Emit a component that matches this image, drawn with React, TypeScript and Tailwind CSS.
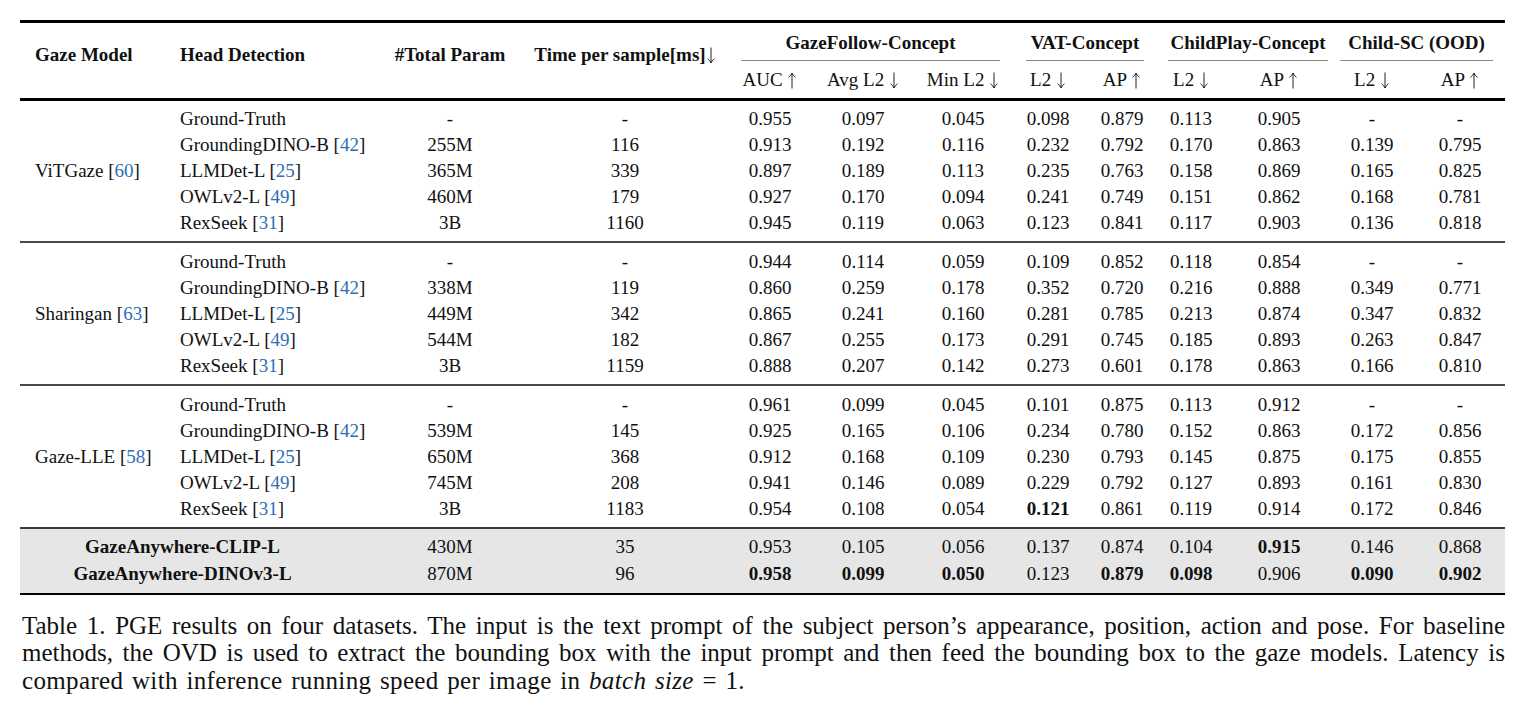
import type { ReactNode } from 'react'

type GroupRow = {
  detector: string
  cite?: string
  values: string[]
}

type Group = {
  model: string
  cite: string
  rows: GroupRow[]
}

// '*' prefix marks a bold value
const groups: Group[] = [
  {
    model: 'ViTGaze',
    cite: '60',
    rows: [
      { detector: 'Ground-Truth', values: ['-', '-', '0.955', '0.097', '0.045', '0.098', '0.879', '0.113', '0.905', '-', '-'] },
      { detector: 'GroundingDINO-B', cite: '42', values: ['255M', '116', '0.913', '0.192', '0.116', '0.232', '0.792', '0.170', '0.863', '0.139', '0.795'] },
      { detector: 'LLMDet-L', cite: '25', values: ['365M', '339', '0.897', '0.189', '0.113', '0.235', '0.763', '0.158', '0.869', '0.165', '0.825'] },
      { detector: 'OWLv2-L', cite: '49', values: ['460M', '179', '0.927', '0.170', '0.094', '0.241', '0.749', '0.151', '0.862', '0.168', '0.781'] },
      { detector: 'RexSeek', cite: '31', values: ['3B', '1160', '0.945', '0.119', '0.063', '0.123', '0.841', '0.117', '0.903', '0.136', '0.818'] }
    ]
  },
  {
    model: 'Sharingan',
    cite: '63',
    rows: [
      { detector: 'Ground-Truth', values: ['-', '-', '0.944', '0.114', '0.059', '0.109', '0.852', '0.118', '0.854', '-', '-'] },
      { detector: 'GroundingDINO-B', cite: '42', values: ['338M', '119', '0.860', '0.259', '0.178', '0.352', '0.720', '0.216', '0.888', '0.349', '0.771'] },
      { detector: 'LLMDet-L', cite: '25', values: ['449M', '342', '0.865', '0.241', '0.160', '0.281', '0.785', '0.213', '0.874', '0.347', '0.832'] },
      { detector: 'OWLv2-L', cite: '49', values: ['544M', '182', '0.867', '0.255', '0.173', '0.291', '0.745', '0.185', '0.893', '0.263', '0.847'] },
      { detector: 'RexSeek', cite: '31', values: ['3B', '1159', '0.888', '0.207', '0.142', '0.273', '0.601', '0.178', '0.863', '0.166', '0.810'] }
    ]
  },
  {
    model: 'Gaze-LLE',
    cite: '58',
    rows: [
      { detector: 'Ground-Truth', values: ['-', '-', '0.961', '0.099', '0.045', '0.101', '0.875', '0.113', '0.912', '-', '-'] },
      { detector: 'GroundingDINO-B', cite: '42', values: ['539M', '145', '0.925', '0.165', '0.106', '0.234', '0.780', '0.152', '0.863', '0.172', '0.856'] },
      { detector: 'LLMDet-L', cite: '25', values: ['650M', '368', '0.912', '0.168', '0.109', '0.230', '0.793', '0.145', '0.875', '0.175', '0.855'] },
      { detector: 'OWLv2-L', cite: '49', values: ['745M', '208', '0.941', '0.146', '0.089', '0.229', '0.792', '0.127', '0.893', '0.161', '0.830'] },
      { detector: 'RexSeek', cite: '31', values: ['3B', '1183', '0.954', '0.108', '0.054', '*0.121', '0.861', '0.119', '0.914', '0.172', '0.846'] }
    ]
  }
]

const ours = [
  { name: 'GazeAnywhere-CLIP-L', values: ['430M', '35', '0.953', '0.105', '0.056', '0.137', '0.874', '0.104', '*0.915', '0.146', '0.868'] },
  { name: 'GazeAnywhere-DINOv3-L', values: ['870M', '96', '*0.958', '*0.099', '*0.050', '0.123', '*0.879', '*0.098', '0.906', '*0.090', '*0.902'] }
]

const colWidths = ['w-[145px]', 'w-[220px]', 'w-[130px]', 'w-[220px]', 'w-[70px]', 'w-[116px]', 'w-[84px]', 'w-[86px]', 'w-[62px]', 'w-[76px]', 'w-[100px]', 'w-[86px]', 'w-[90px]']

const Cite = ({ n }: { n: string }) => (
  <>
    [<span className="text-[#2f6db8]">{ n }</span>]
  </>
)

const Value = ({ v }: { v: string }) => (
  v.startsWith('*') ? <span className="font-bold">{ v.slice(1) }</span> : <>{ v }</>
)

// thin math-style arrow, like $\uparrow$ / $\downarrow$
const Arrow = ({ up }: { up?: boolean }) => (
  <svg
    width="10"
    height="17"
    viewBox="0 0 10 17"
    className="inline-block align-[-3px]"
    fill="none"
    stroke="#222"
    strokeWidth="1"
  >
    { up ? (
      <path d="M5 16.5V1M5 1C4.3 2.8 3 4.3 1.5 5.3M5 1C5.7 2.8 7 4.3 8.5 5.3" />
    ) : (
      <path d="M5 0.5V16M5 16C4.3 14.2 3 12.7 1.5 11.7M5 16C5.7 14.2 7 12.7 8.5 11.7" />
    ) }
  </svg>
)

const Spacer = ({ h, className = '' }: { h: string, className?: string }) => (
  <tr className={ `${h} ${className}` }>
    <td colSpan={ 13 } className="p-0" />
  </tr>
)

const Spanner = ({ label, ml, mr }: { label: string, ml: string, mr: string }) => (
  <div className={ `${ml} ${mr} mb-[2px]` }>
    <div className="text-center font-bold leading-[22px]">{ label }</div>
    <div className="mt-[6px] h-px bg-[#8a8a8a]" />
  </div>
)

const SubHead = ({ children }: { children: ReactNode }) => (
  <th className="p-0 text-center align-middle font-normal whitespace-nowrap">{ children }</th>
)

export default function App() {
  return (
    <div className="min-h-[722px] bg-white pt-[20px] text-[#111] [font-family:'Liberation_Serif','Times_New_Roman',serif]">
      <table className="ml-[20px] w-[1485px] table-fixed border-collapse text-[19px] leading-[22px]">
        <colgroup>
          { colWidths.map((w, i) => <col key={ i } className={ w } />) }
        </colgroup>
        <thead>
          <tr className="h-[41px] border-t-[3px] border-black">
            <th rowSpan={ 2 } className="pb-[12px] pl-[15px] text-left align-middle font-bold">Gaze Model</th>
            <th rowSpan={ 2 } className="pb-[12px] pl-[15px] text-left align-middle font-bold">Head Detection</th>
            <th rowSpan={ 2 } className="pb-[12px] text-center align-middle font-bold">#Total Param</th>
            <th rowSpan={ 2 } className="pb-[12px] text-center align-middle font-bold whitespace-nowrap">Time per sample[ms]<Arrow /></th>
            <th colSpan={ 3 } className="p-0 align-bottom"><Spanner label="GazeFollow-Concept" ml="ml-[6px]" mr="mr-[5px]" /></th>
            <th colSpan={ 2 } className="p-0 align-bottom"><Spanner label="VAT-Concept" ml="ml-[21px]" mr="mr-[9px]" /></th>
            <th colSpan={ 2 } className="p-0 align-bottom"><Spanner label="ChildPlay-Concept" ml="ml-[15px]" mr="mr-[1px]" /></th>
            <th colSpan={ 2 } className="p-0 align-bottom"><Spanner label="Child-SC (OOD)" ml="ml-[11px]" mr="mr-[12px]" /></th>
          </tr>
          <tr className="h-[37px] border-b-[3px] border-black">
            <SubHead>AUC <Arrow up /></SubHead>
            <SubHead>Avg L2 <Arrow /></SubHead>
            <SubHead>Min L2 <Arrow /></SubHead>
            <SubHead>L2 <Arrow /></SubHead>
            <SubHead>AP <Arrow up /></SubHead>
            <SubHead>L2 <Arrow /></SubHead>
            <SubHead>AP <Arrow up /></SubHead>
            <SubHead>L2 <Arrow /></SubHead>
            <SubHead>AP <Arrow up /></SubHead>
          </tr>
        </thead>

        { groups.map((group, gi) => (
          <tbody key={ group.model }>
            <Spacer h={ gi === 0 ? 'h-[6px]' : 'h-[7px]' } className={ gi === 0 ? '' : 'border-t-2 border-[#4a4a4a]' } />
            { group.rows.map((row, ri) => (
              <tr key={ row.detector } className="h-[26px]">
                { ri === 0 && (
                  <td rowSpan={ 5 } className="pl-[15px] text-left align-middle">
                    { group.model } <Cite n={ group.cite } />
                  </td>
                ) }
                <td className="pl-[15px] text-left whitespace-nowrap">
                  { row.detector }{ row.cite && <> <Cite n={ row.cite } /></> }
                </td>
                { row.values.map((v, vi) => (
                  <td key={ vi } className="text-center">
                    <Value v={ v } />
                  </td>
                )) }
              </tr>
            )) }
            <Spacer h="h-[6px]" />
          </tbody>
        )) }

        <tbody className="bg-[#e6e6e6]">
          <Spacer h="h-[6px]" className="border-t-2 border-[#3a3a3a]" />
          { ours.map((row) => (
            <tr key={ row.name } className="h-[27px]">
              <td colSpan={ 2 } className="pr-[40px] text-center font-bold">{ row.name }</td>
              { row.values.map((v, vi) => (
                <td key={ vi } className="text-center">
                  <Value v={ v } />
                </td>
              )) }
            </tr>
          )) }
          <Spacer h="h-[6px]" className="border-b-2 border-black" />
        </tbody>
      </table>

      <div className="ml-[22px] mt-[17px] w-[1483px] text-[25px] leading-[27.5px] text-[#111]">
        <div className="text-justify whitespace-nowrap [text-align-last:justify]">
          Table 1. PGE results on four datasets. The input is the text prompt of the subject person’s appearance, position, action and pose. For baseline
        </div>
        <div className="text-justify whitespace-nowrap [text-align-last:justify]">
          methods, the OVD is used to extract the bounding box with the input prompt and then feed the bounding box to the gaze models. Latency is
        </div>
        <div className="tracking-[0.35px] [word-spacing:2px]">
          compared with inference running speed per image in <i>batch size</i> = 1.
        </div>
      </div>
    </div>
  )
}
